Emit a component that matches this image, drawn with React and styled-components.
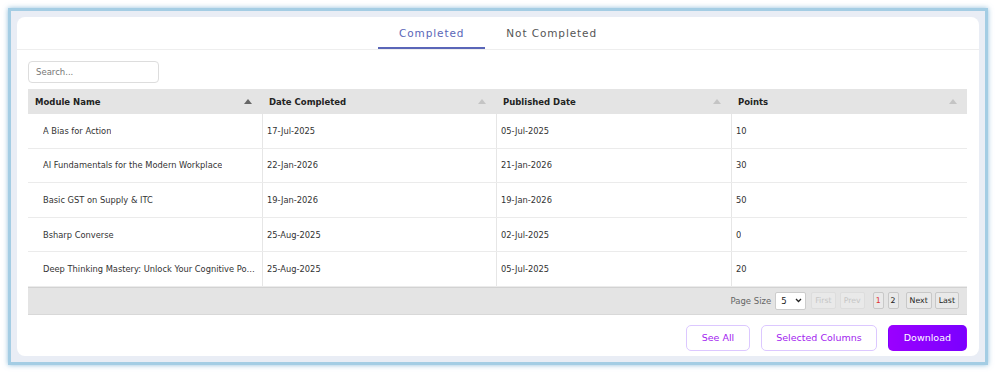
import React from "react";
import styled, { createGlobalStyle } from "styled-components";

const Global = createGlobalStyle`
  body {
    margin: 0;
    background: #ffffff;
    font-family: "DejaVu Sans", "Open Sans", sans-serif;
  }
`;

const Frame = styled.div`
  margin: 8px;
  width: 980px;
  height: 357px;
  box-sizing: border-box;
  border: 3px solid #a4cde4;
  box-shadow: 0 0 5px rgba(110, 170, 210, 0.75);
  background: #e9edf5;
  padding: 6px;
`;

const Card = styled.div`
  background: #ffffff;
  border-radius: 8px;
  height: 100%;
  display: flex;
  flex-direction: column;
`;

const TabBar = styled.div`
  display: flex;
  justify-content: center;
  height: 32px;
  flex-shrink: 0;
  border-bottom: 1px solid #eeeeee;
`;

const Tab = styled.div`
  padding: 0 21px;
  display: flex;
  align-items: center;
  font-size: 10.5px;
  letter-spacing: 0.9px;
  color: ${(p) => (p.$active ? "#5a66b8" : "#555555")};
  border-bottom: 2px solid ${(p) => (p.$active ? "#5a66b8" : "transparent")};
  padding-top: 2px;
`;

const Body = styled.div`
  padding: 11px 12px 6px 11px;
  display: flex;
  flex-direction: column;
  flex: 1;
`;

const Search = styled.input`
  width: 131px;
  height: 22px;
  box-sizing: border-box;
  border: 1px solid #dddddd;
  border-radius: 4px;
  padding: 0 7px;
  font-family: inherit;
  font-size: 8.5px;
  outline: none;
  &::placeholder {
    color: #777777;
  }
`;

const Table = styled.div`
  margin-top: 6px;
  display: flex;
  flex-direction: column;
`;

const Row = styled.div`
  display: grid;
  grid-template-columns: 234px 234px 235px 1fr;
  box-sizing: border-box;
  height: ${(p) => (p.$head ? "25px" : "34.6px")};
  background: ${(p) => (p.$head ? "#e4e4e4" : "#ffffff")};
  border-bottom: ${(p) => (p.$head ? "none" : "1px solid #ebebeb")};
`;

const HeadCell = styled.div`
  display: flex;
  align-items: center;
  justify-content: space-between;
  padding: 0 10px 0 7px;
  font-size: 8.5px;
  font-weight: bold;
  color: #222222;
`;

const SortArrow = styled.span`
  width: 0;
  height: 0;
  border-left: 4px solid transparent;
  border-right: 4px solid transparent;
  border-bottom: 5px solid ${(p) => (p.$active ? "#666666" : "#c4c4c4")};
`;

const Cell = styled.div`
  display: flex;
  align-items: center;
  padding: 0 5px 0 ${(p) => (p.$first ? "15px" : "4px")};
  border-left: ${(p) => (p.$first ? "none" : "1px solid #e6e6e6")};
  font-size: 8.3px;
  color: #333333;
  overflow: hidden;
  span {
    white-space: nowrap;
    overflow: hidden;
    text-overflow: ellipsis;
  }
`;

const Footer = styled.div`
  height: 28px;
  box-sizing: border-box;
  background: #e4e4e4;
  border-top: 1px solid #d2d2d2;
  border-bottom: 1px solid #d8d8d8;
  display: flex;
  align-items: center;
  justify-content: flex-end;
  padding-right: 8px;
  font-size: 8.5px;
`;

const PageLabel = styled.span`
  color: #666666;
  margin-right: 4px;
`;

const PageSelect = styled.div`
  width: 31px;
  height: 18px;
  box-sizing: border-box;
  background: #ffffff;
  border: 1px solid #cccccc;
  border-radius: 2px;
  display: flex;
  align-items: center;
  justify-content: space-between;
  padding: 0 3px 0 5px;
  font-size: 8.5px;
  color: #222222;
  margin-right: 5px;
`;

const PageBtn = styled.div`
  height: 17px;
  box-sizing: border-box;
  padding: 0 ${(p) => p.$pad ?? 3}px;
  display: flex;
  align-items: center;
  justify-content: center;
  border: 1px solid ${(p) => (p.$disabled ? "#dddddd" : "#c8c8c8")};
  border-radius: 2px;
  background: #e9e9e9;
  font-size: 7.8px;
  color: ${(p) => (p.$disabled ? "#c6c6c6" : p.$current ? "#e03030" : "#222222")};
  margin-left: ${(p) => p.$gap ?? 4}px;
`;

const Actions = styled.div`
  display: flex;
  justify-content: flex-end;
  gap: 11px;
  margin-top: 10px;
`;

const ActionBtn = styled.div`
  height: 26px;
  box-sizing: border-box;
  padding: 0 ${(p) => p.$pad}px;
  display: flex;
  align-items: center;
  border-radius: 5px;
  font-size: 9.5px;
  font-weight: 500;
  border: 1px solid ${(p) => (p.$filled ? "transparent" : "#dcc8ff")};
  background: ${(p) => (p.$filled ? "linear-gradient(90deg, #9a00ff, #7b00ff)" : "#ffffff")};
  color: ${(p) => (p.$filled ? "#ffffff" : "#a323f0")};
`;

const rows = [
  ["A Bias for Action", "17-Jul-2025", "05-Jul-2025", "10"],
  ["AI Fundamentals for the Modern Workplace", "22-Jan-2026", "21-Jan-2026", "30"],
  ["Basic GST on Supply & ITC", "19-Jan-2026", "19-Jan-2026", "50"],
  ["Bsharp Converse", "25-Aug-2025", "02-Jul-2025", "0"],
  ["Deep Thinking Mastery: Unlock Your Cognitive Potential", "25-Aug-2025", "05-Jul-2025", "20"],
];

const heads = ["Module Name", "Date Completed", "Published Date", "Points"];

export default function App() {
  return (
    <>
      <Global />
      <Frame>
        <Card>
          <TabBar>
            <Tab $active>Completed</Tab>
            <Tab>Not Completed</Tab>
          </TabBar>
          <Body>
            <Search placeholder="Search..." />
            <Table>
              <Row $head>
                {heads.map((h, i) => (
                  <HeadCell key={h}>
                    {h}
                    <SortArrow $active={i === 0} />
                  </HeadCell>
                ))}
              </Row>
              {rows.map((r) => (
                <Row key={r[0]}>
                  {r.map((c, i) => (
                    <Cell key={i} $first={i === 0}>
                      <span>{c}</span>
                    </Cell>
                  ))}
                </Row>
              ))}
              <Footer>
                <PageLabel>Page Size</PageLabel>
                <PageSelect>
                  5
                  <svg width="7" height="5" viewBox="0 0 7 5">
                    <path d="M1 1l2.5 2.5L6 1" fill="none" stroke="#222" strokeWidth="1.3" />
                  </svg>
                </PageSelect>
                <PageBtn $disabled $gap={0}>First</PageBtn>
                <PageBtn $disabled>Prev</PageBtn>
                <PageBtn $current $gap={8} $pad={2}>1</PageBtn>
                <PageBtn $pad={2}>2</PageBtn>
                <PageBtn $gap={7}>Next</PageBtn>
                <PageBtn $gap={3}>Last</PageBtn>
              </Footer>
            </Table>
            <Actions>
              <ActionBtn $pad={15}>See All</ActionBtn>
              <ActionBtn $pad={14}>Selected Columns</ActionBtn>
              <ActionBtn $pad={15} $filled>Download</ActionBtn>
            </Actions>
          </Body>
        </Card>
      </Frame>
    </>
  );
}
